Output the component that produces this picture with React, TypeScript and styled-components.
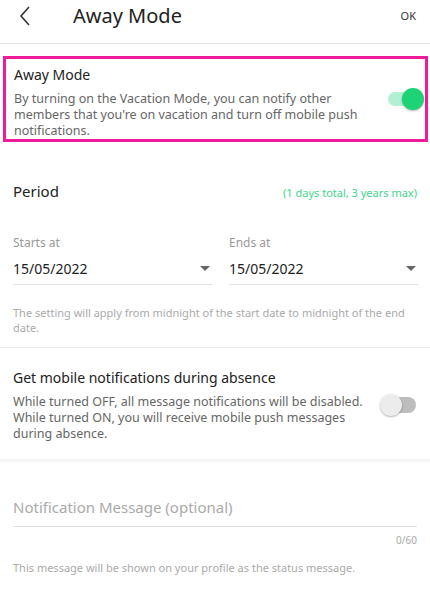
import React, { useState } from "react";
import styled, { createGlobalStyle } from "styled-components";

const GlobalStyle = createGlobalStyle`
  body {
    margin: 0;
    background: #ffffff;
    font-family: "Noto Sans", "Open Sans", sans-serif;
  }
`;

const App = () => {
  const [away, setAway] = useState(true);
  const [mobile, setMobile] = useState(false);

  return (
    <Page>
      <GlobalStyle />
      <Header>
        <BackButton aria-label="back">
          <svg width="14" height="22" viewBox="0 0 14 22">
            <path d="M11 2 L3 11 L11 20" fill="none" stroke="#333" strokeWidth="1.6" />
          </svg>
        </BackButton>
        <Title>Away Mode</Title>
        <OkButton>OK</OkButton>
      </Header>

      <Highlight>
        <LabelRow>
          <TextCol>
            <ItemTitle>Away Mode</ItemTitle>
            <ItemDesc>
              By turning on the Vacation Mode, you can notify other
              <br />
              members that you're on vacation and turn off mobile push
              <br />
              notifications.
            </ItemDesc>
          </TextCol>
          <Switch on={away} onClick={() => setAway(!away)}>
            <Track on={away} />
            <Knob on={away} />
          </Switch>
        </LabelRow>
      </Highlight>

      <PeriodSection>
        <PeriodHead>
          <SectionTitle>Period</SectionTitle>
          <PeriodHint>(1 days total, 3 years max)</PeriodHint>
        </PeriodHead>
        <DateGrid>
          <DateField>
            <FieldLabel>Starts at</FieldLabel>
            <DateSelect>
              <span>15/05/2022</span>
              <Caret />
            </DateSelect>
          </DateField>
          <DateField>
            <FieldLabel>Ends at</FieldLabel>
            <DateSelect>
              <span>15/05/2022</span>
              <Caret />
            </DateSelect>
          </DateField>
        </DateGrid>
        <Note gap={28}>
          The setting will apply from midnight of the start date to midnight of
          the end date.
        </Note>
      </PeriodSection>

      <MobileSection>
        <LabelRow>
          <TextCol>
            <ItemTitle>Get mobile notifications during absence</ItemTitle>
            <ItemDesc>
              While turned OFF, all message notifications will be disabled.
              <br />
              While turned ON, you will receive mobile push messages
              <br />
              during absence.
            </ItemDesc>
          </TextCol>
          <Switch on={mobile} onClick={() => setMobile(!mobile)}>
            <Track on={mobile} />
            <Knob on={mobile} />
          </Switch>
        </LabelRow>
      </MobileSection>

      <MessageSection>
        <MessageInput placeholder="Notification Message (optional)" />
        <Counter>0/60</Counter>
        <Note gap={21}>
          This message will be shown on your profile as the status message.
        </Note>
      </MessageSection>
    </Page>
  );
};

const Page = styled.div`
  width: 430px;
  height: 596px;
  overflow: hidden;
  background: #fff;
  color: #222;
`;

const Header = styled.div`
  display: flex;
  align-items: center;
  height: 44px;
  padding: 0 14px 0 18px;
  border-bottom: 1px solid #e4e4e4;
  box-sizing: border-box;
  margin-bottom: 12px;
`;

const BackButton = styled.button`
  border: 0;
  background: none;
  padding: 0;
  display: flex;
  margin-top: -12px;
  width: 55px;
`;

const Title = styled.h1`
  flex: 1;
  margin: -12px 0 0;
  font-size: 20px;
  font-weight: 400;
  color: #222;
`;

const OkButton = styled.button`
  border: 0;
  background: none;
  padding: 0;
  margin-top: -13px;
  font-family: inherit;
  font-size: 11px;
  color: #333;
`;

const Highlight = styled.div`
  margin: 0 2px 0 3px;
  border: 3px solid #ee1c9a;
  padding: 5px 1px 0 8px;
`;

const LabelRow = styled.div`
  display: flex;
  align-items: center;
  justify-content: space-between;
`;

const TextCol = styled.div`
  flex: 1;
  min-width: 0;
`;

const ItemTitle = styled.div`
  font-size: 14px;
  line-height: 22px;
  color: #222;
`;

const ItemDesc = styled.div`
  font-size: 12.5px;
  line-height: 16px;
  color: #666;
  white-space: nowrap;
  margin-top: 5px;
`;

const Switch = styled.div<{ on: boolean }>`
  position: relative;
  width: 36px;
  height: 24px;
  flex-shrink: 0;
  margin-top: ${(p) => (p.on ? "-6px" : "0")};
  cursor: pointer;
`;

const Track = styled.div<{ on: boolean }>`
  position: absolute;
  left: ${(p) => (p.on ? "0" : "8px")};
  right: ${(p) => (p.on ? "8px" : "0")};
  top: ${(p) => (p.on ? "5px" : "4px")};
  height: ${(p) => (p.on ? "14px" : "16px")};
  border-radius: 8px;
  background: ${(p) => (p.on ? "#b2f0d3" : "#bdbdbd")};
`;

const Knob = styled.div<{ on: boolean }>`
  position: absolute;
  top: 1px;
  left: ${(p) => (p.on ? "14px" : "0")};
  width: 22px;
  height: 22px;
  border-radius: 50%;
  background: ${(p) => (p.on ? "#1ed276" : "#ececec")};
  box-shadow: 0 1px 2px rgba(0, 0, 0, 0.3);
`;

const PeriodSection = styled.div`
  padding: 39px 13px 12px;
  border-bottom: 1px solid #e8e8e8;
`;

const PeriodHead = styled.div`
  display: flex;
  justify-content: space-between;
  align-items: baseline;
`;

const SectionTitle = styled.div`
  font-size: 15px;
  color: #222;
`;

const PeriodHint = styled.div`
  font-size: 11px;
  color: #3fd68e;
`;

const DateGrid = styled.div`
  display: grid;
  grid-template-columns: 199px 189px;
  column-gap: 17px;
  margin-top: 33px;
`;

const DateField = styled.div`
  display: flex;
  flex-direction: column;
`;

const FieldLabel = styled.div`
  font-size: 12px;
  color: #999;
`;

const DateSelect = styled.div`
  display: flex;
  align-items: center;
  justify-content: space-between;
  margin-top: 8px;
  padding: 0 2px 6px 0;
  border-bottom: 1px solid #e2e2e2;
  font-size: 14px;
  color: #222;
`;

const Caret = styled.span`
  width: 0;
  height: 0;
  border-left: 5px solid transparent;
  border-right: 5px solid transparent;
  border-top: 5px solid #666;
`;

const Note = styled.div<{ gap: number }>`
  font-size: 11px;
  line-height: 15px;
  color: #aaa;
  margin-top: ${(p) => p.gap - 8}px;
`;

const MobileSection = styled.div`
  padding: 19px 14px 17px 13px;
  border-bottom: 3px solid #f6f6f6;
`;

const MessageSection = styled.div`
  padding: 35px 13px 0;
  display: flex;
  flex-direction: column;
`;

const MessageInput = styled.input`
  border: 0;
  border-bottom: 1px solid #e2e2e2;
  padding: 0 0 9px;
  font-family: inherit;
  font-size: 15px;
  color: #222;
  outline: none;
  &::placeholder {
    color: #aaa;
  }
`;

const Counter = styled.div`
  align-self: flex-end;
  font-size: 10px;
  color: #aaa;
  margin-top: 6px;
`;

export default App;
